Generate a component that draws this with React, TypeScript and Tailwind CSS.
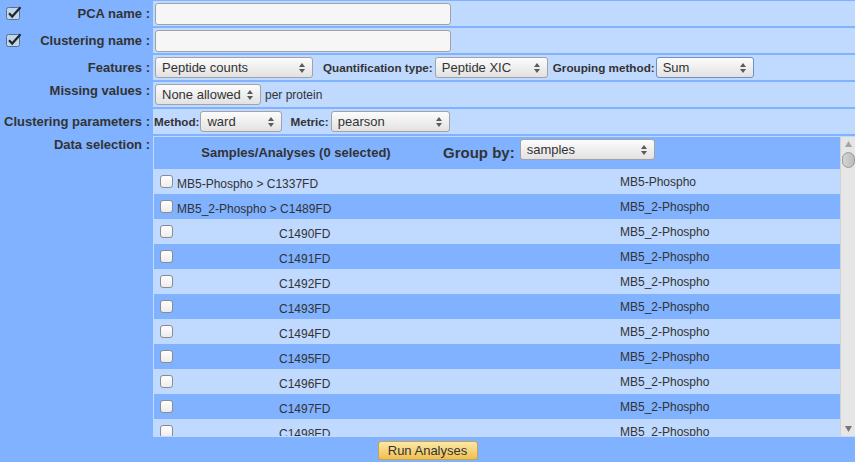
import React from 'react';

const rows = [
  { name: 'MB5-Phospho > C1337FD', group: 'MB5-Phospho', child: false },
  { name: 'MB5_2-Phospho > C1489FD', group: 'MB5_2-Phospho', child: false },
  { name: 'C1490FD', group: 'MB5_2-Phospho', child: true },
  { name: 'C1491FD', group: 'MB5_2-Phospho', child: true },
  { name: 'C1492FD', group: 'MB5_2-Phospho', child: true },
  { name: 'C1493FD', group: 'MB5_2-Phospho', child: true },
  { name: 'C1494FD', group: 'MB5_2-Phospho', child: true },
  { name: 'C1495FD', group: 'MB5_2-Phospho', child: true },
  { name: 'C1496FD', group: 'MB5_2-Phospho', child: true },
  { name: 'C1497FD', group: 'MB5_2-Phospho', child: true },
  { name: 'C1498FD', group: 'MB5_2-Phospho', child: true },
];

function Arrows() {
  return (
    <svg width="8" height="12" viewBox="0 0 8 12" className="shrink-0">
      <polygon points="4,1 1,5 7,5" fill="#5a5a5a" />
      <polygon points="1,7 7,7 4,11" fill="#5a5a5a" />
    </svg>
  );
}

function Select({ value, className }: { value: string; className: string }) {
  return (
    <div className={`flex items-center h-[21px] rounded-[3px] border bg-linear-to-b from-[#fcfcfc] to-[#e2e2e2] pl-[6px] pr-[6px] text-[13px] leading-[15px] shrink-0 ${className}`}>
      <span className="flex-1 whitespace-nowrap overflow-hidden">{value}</span>
      <Arrows />
    </div>
  );
}

function Checked() {
  return (
    <svg width="16" height="15" viewBox="0 0 16 15" className="shrink-0">
      <rect x="0.5" y="1.5" width="13" height="12" rx="2" fill="#c3d5e9" stroke="#56718f" />
      <path d="M3 7.2 L6.2 10.6 L14.5 1.2" fill="none" stroke="#1e2630" strokeWidth="2.2" />
    </svg>
  );
}

function Box() {
  return <div className="w-[13px] h-[13px] rounded-[3px] border border-[#8c8c8c] bg-linear-to-b from-[#ffffff] to-[#ececec] shrink-0" />;
}

export default function App() {
  return (
    <div className="w-[855px] h-[462px] overflow-hidden bg-[#80b2ff] text-[#333] font-['Liberation_Sans',Arial,sans-serif] pt-px">
      <div className="flex flex-col gap-[2px]">
        <div className="flex gap-[2px] h-[25px]">
          <div className="w-[151px] flex items-center pl-[6px] pr-px">
            <Checked />
            <span className="ml-auto font-bold text-[13px]">PCA name :</span>
          </div>
          <div className="flex-1 bg-[#c0d9ff] flex items-center pl-[2px]">
            <div className="w-[296px] h-[22px] rounded-[3px] border border-[#a2a2a2] bg-[#f6f6f6]" />
          </div>
        </div>

        <div className="flex gap-[2px] h-[25px]">
          <div className="w-[151px] flex items-center pl-[6px] pr-px">
            <Checked />
            <span className="ml-auto font-bold text-[13px]">Clustering name :</span>
          </div>
          <div className="flex-1 bg-[#c0d9ff] flex items-center pl-[2px]">
            <div className="w-[296px] h-[22px] rounded-[3px] border border-[#a2a2a2] bg-[#f6f6f6]" />
          </div>
        </div>

        <div className="flex gap-[2px] h-[25px]">
          <div className="w-[151px] flex items-center justify-end pr-px">
            <span className="font-bold text-[13px]">Features :</span>
          </div>
          <div className="flex-1 bg-[#c0d9ff] flex items-center pl-[2px]">
            <Select value="Peptide counts" className="w-[158px] border-[#a3a3a3]" />
            <span className="ml-[10px] font-bold text-[11.7px]">Quantification type:</span>
            <Select value="Peptide XIC" className="ml-[2px] w-[113px] border-[#a3a3a3]" />
            <span className="ml-[5px] font-bold text-[11.7px]">Grouping method:</span>
            <Select value="Sum" className="ml-px w-[98px] border-[#6f90c4]" />
          </div>
        </div>

        <div className="flex gap-[2px] h-[25px]">
          <div className="w-[151px] flex items-start justify-end pr-px pt-px">
            <span className="font-bold text-[13px] leading-[15px]">Missing values :</span>
          </div>
          <div className="flex-1 bg-[#c0d9ff] flex items-center pl-[2px]">
            <Select value="None allowed" className="w-[106px] border-[#a3a3a3]" />
            <span className="ml-[4px] text-[12px]">per protein</span>
          </div>
        </div>

        <div className="flex gap-[2px] h-[25px]">
          <div className="w-[151px] flex items-center justify-end pr-px">
            <span className="font-bold text-[13px]">Clustering parameters :</span>
          </div>
          <div className="flex-1 bg-[#c0d9ff] flex items-center pl-px">
            <span className="font-bold text-[11.7px]">Method:</span>
            <Select value="ward" className="ml-px w-[82px] border-[#a3a3a3]" />
            <span className="ml-[8px] font-bold text-[11.7px]">Metric:</span>
            <Select value="pearson" className="ml-[2px] w-[119px] border-[#a3a3a3]" />
          </div>
        </div>

        <div className="flex gap-[2px] h-[301px]">
          <div className="w-[151px] flex items-start justify-end pr-px pt-px">
            <span className="font-bold text-[13px] leading-[15px]">Data selection :</span>
          </div>
          <div className="flex-1 bg-[#c0d9ff] p-px pr-0 flex">
            <div className="flex-1 overflow-hidden flex flex-col">
              <div className="flex h-[32px] shrink-0 bg-[#80b2ff]">
                <div className="w-[284px] flex items-center justify-center font-bold text-[13px]">
                  Samples/Analyses (0 selected)
                </div>
                <div className="flex items-start pl-[5px] pt-[2px]">
                  <span className="mt-[5px] font-bold text-[15px] leading-[17px]">Group by:</span>
                  <Select value="samples" className="ml-[5px] h-[20px] w-[135px] border-[#a3a3a3]" />
                </div>
              </div>
              {rows.map((r, i) => (
                <div key={r.name} className={`flex h-[25px] shrink-0 text-[12px] ${i % 2 === 0 ? 'bg-[#c0d9ff]' : 'bg-[#80b2ff]'}`}>
                  <div className="w-[284px] flex items-start pl-[6px]">
                    <div className="mt-[6px]">
                      <Box />
                    </div>
                    <span className={`mt-[8px] leading-[14px] whitespace-nowrap ${r.child ? 'pl-[106px]' : 'pl-[4px]'}`}>{r.name}</span>
                  </div>
                  <div className="flex items-center pl-[182px] leading-[14px] whitespace-nowrap">{r.group}</div>
                </div>
              ))}
            </div>
            <div className="w-[15px] bg-[#e6e6e6] border-l border-[#d2d2d2] flex flex-col items-center shrink-0">
              <svg width="9" height="8" viewBox="0 0 9 8" className="mt-[3px]">
                <polygon points="4.5,1 1,7 8,7" fill="#a4a4a4" />
              </svg>
              <div className="mt-[4px] w-[13px] h-[16px] rounded-[7px] border border-[#989898] bg-linear-to-r from-[#d4d4d4] to-[#bcbcbc]" />
              <div className="flex-1" />
              <svg width="9" height="8" viewBox="0 0 9 8" className="mb-[3px]">
                <polygon points="1,1 8,1 4.5,7" fill="#777" />
              </svg>
            </div>
          </div>
        </div>
      </div>

      <div className="mt-[4px] flex justify-center">
        <div className="w-[100px] h-[19px] rounded-[3px] border border-[#c9a24b] bg-linear-to-b from-[#fbe8a6] to-[#efbf4c] flex items-center justify-center text-[13px] leading-[15px]">
          Run Analyses
        </div>
      </div>
    </div>
  );
}
